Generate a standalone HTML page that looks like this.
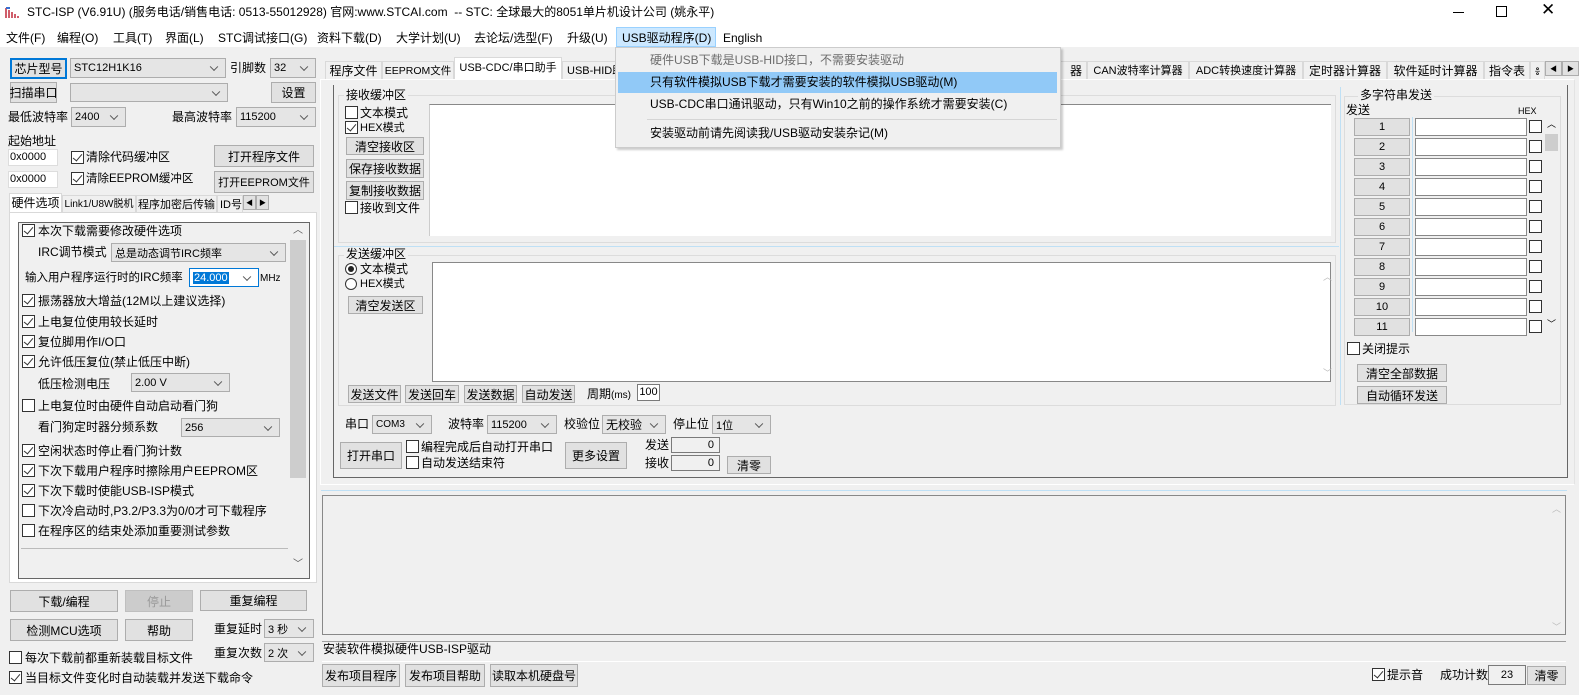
<!DOCTYPE html>
<html><head><meta charset="utf-8"><style>
*{box-sizing:border-box;margin:0;padding:0}
body{width:1579px;height:695px;overflow:hidden;background:#f0f0f0;position:relative;font:12px "Liberation Sans","Noto Sans CJK SC",sans-serif;color:#000}
div,span{position:absolute}
.t{white-space:nowrap;line-height:14px}
.b{background:#e1e1e1;border:1px solid #adadad;text-align:center;white-space:nowrap;display:flex;align-items:center;justify-content:center}
.s{background:#e5e5e5;border:1px solid #adadad;white-space:nowrap;padding-left:3px;display:flex;align-items:center;font-size:11px}
.s::after{content:"";position:absolute;right:8px;top:50%;width:5px;height:5px;border-right:1px solid #555;border-bottom:1px solid #555;transform:translateY(-70%) rotate(45deg)}
.cb{width:13px;height:13px;border:1px solid #333;background:#fff}
.cb.on::after{content:"";position:absolute;left:3px;top:0px;width:4px;height:8px;border-right:1.5px solid #333;border-bottom:1.5px solid #333;transform:rotate(40deg)}
.in{background:#fff;border:1px solid #7a7a7a}
.tab{border:1px solid #d9d9d9;border-bottom:none;background:#f0f0f0;text-align:center;white-space:nowrap;line-height:18px;overflow:hidden}
.grp{border:1px solid #dcdcdc}
</style></head><body>
<div style="left:0;top:0;width:1579px;height:47px;background:#fff"></div>
<div style="left:5px;top:6px;width:14px;height:13px">
<svg width="14" height="13"><g stroke="#c0283a" stroke-width="1.5" fill="none"><path d="M1 12V2M4 12V4M7 12V6M10 12V8M13 12V10"/></g><path d="M1 1h4v2H1z" fill="#3a6fd0"/></svg></div>
<div class="t" style="left:27px;top:5px;font-size:12px">STC-ISP (V6.91U) (服务电话/销售电话: 0513-55012928) 官网:www.STCAI.com&nbsp; -- STC: 全球最大的8051单片机设计公司 (姚永平)</div>
<div style="left:1453px;top:12px;width:11px;height:1px;background:#000"></div>
<div style="left:1496px;top:6px;width:11px;height:11px;border:1px solid #000"></div>
<div class="t" style="left:1541px;top:3px;font-size:17px;font-weight:300">✕</div>
<div class="t" style="left:6px;top:31px">文件(F)</div>
<div class="t" style="left:57px;top:31px">编程(O)</div>
<div class="t" style="left:113px;top:31px">工具(T)</div>
<div class="t" style="left:165px;top:31px">界面(L)</div>
<div class="t" style="left:218px;top:31px">STC调试接口(G)</div>
<div class="t" style="left:317px;top:31px">资料下载(D)</div>
<div class="t" style="left:396px;top:31px">大学计划(U)</div>
<div class="t" style="left:474px;top:31px">去论坛/选型(F)</div>
<div class="t" style="left:567px;top:31px">升级(U)</div>
<div style="left:616px;top:27px;width:100px;height:20px;background:#cce8ff;border:1px solid #99d1ff"></div>
<div class="t" style="left:622px;top:31px">USB驱动程序(D)</div>
<div class="t" style="left:723px;top:31px">English</div>

<div class="b" style="left:10px;top:58px;width:57px;height:21px;border:2px solid #0078d7">芯片型号</div>
<div class="s" style="left:70px;top:58px;width:156px;height:20px">STC12H1K16</div>
<div class="t" style="left:230px;top:61px">引脚数</div>
<div class="s" style="left:270px;top:58px;width:46px;height:20px">32</div>
<div class="b" style="left:10px;top:82px;width:47px;height:21px">扫描串口</div>
<div class="s" style="left:70px;top:83px;width:158px;height:19px"></div>
<div class="b" style="left:271px;top:82px;width:45px;height:21px">设置</div>
<div class="t" style="left:8px;top:110px">最低波特率</div>
<div class="s" style="left:71px;top:107px;width:55px;height:20px">2400</div>
<div class="t" style="left:172px;top:110px">最高波特率</div>
<div class="s" style="left:236px;top:107px;width:80px;height:20px">115200</div>
<div class="t" style="left:8px;top:134px">起始地址</div>
<div class="in" style="left:8px;top:149px;width:50px;height:17px;border-color:#ddd;font-size:11px;padding-left:1px;line-height:15px">0x0000</div>
<div class="cb on" style="left:71px;top:151px"></div><div class="t" style="left:86px;top:150px">清除代码缓冲区</div>
<div class="b" style="left:214px;top:145px;width:100px;height:22px">打开程序文件</div>
<div class="in" style="left:8px;top:171px;width:50px;height:17px;border-color:#ddd;font-size:11px;padding-left:1px;line-height:15px">0x0000</div>
<div class="cb on" style="left:71px;top:172px"></div><div class="t" style="left:86px;top:172px;font-size:11.5px">清除EEPROM缓冲区</div>
<div class="b" style="left:214px;top:171px;width:100px;height:22px;font-size:11px">打开EEPROM文件</div>
<div class="tab" style="left:9px;top:193px;width:53px;height:20px;background:#fff">硬件选项</div>
<div class="tab" style="left:62px;top:195px;width:74px;height:18px;font-size:10px">Link1/U8W脱机</div>
<div class="tab" style="left:136px;top:195px;width:81px;height:18px;font-size:11px">程序加密后传输</div>
<div class="tab" style="left:217px;top:195px;width:26px;height:18px;text-align:left;padding-left:2px;font-size:11px">ID号</div>
<div class="b" style="left:243px;top:195px;width:13px;height:15px;font-size:7px">◀</div>
<div class="b" style="left:256px;top:195px;width:13px;height:15px;font-size:7px">▶</div>
<div style="left:9px;top:212px;width:308px;height:371px;background:#fff;border:1px solid #d9d9d9"></div>
<div style="left:18px;top:222px;width:292px;height:357px;background:#f0f0f0;border:1px solid #666"></div>
<div style="left:290px;top:240px;width:16px;height:238px;background:#cdcdcd"></div>
<div class="t" style="left:293px;top:224px;font-size:10px;color:#555">︿</div>
<div class="t" style="left:293px;top:558px;font-size:10px;color:#555">﹀</div>
<div style="left:21px;top:548px;width:267px;height:1px;background:#bbb"></div>
<div class="cb on" style="left:22px;top:224px"></div><div class="t" style="left:38px;top:224px">本次下载需要修改硬件选项</div>
<div class="t" style="left:38px;top:245px">IRC调节模式</div>
<div class="s" style="left:111px;top:243px;width:175px;height:19px">总是动态调节IRC频率</div>
<div class="t" style="left:25px;top:271px;font-size:11.5px">输入用户程序运行时的IRC频率</div>
<div class="s" style="left:189px;top:268px;width:70px;height:19px;background:#fff;border:1px solid #0078d7"><span style="position:static;background:#0078d7;color:#fff;padding:0 1px">24.000</span></div>
<div class="t" style="left:260px;top:272px;font-size:10px">MHz</div>
<div class="cb on" style="left:22px;top:294px"></div><div class="t" style="left:38px;top:294px">振荡器放大增益(12M以上建议选择)</div>
<div class="cb on" style="left:22px;top:315px"></div><div class="t" style="left:38px;top:315px">上电复位使用较长延时</div>
<div class="cb on" style="left:22px;top:335px"></div><div class="t" style="left:38px;top:335px">复位脚用作I/O口</div>
<div class="cb on" style="left:22px;top:355px"></div><div class="t" style="left:38px;top:355px">允许低压复位(禁止低压中断)</div>
<div class="t" style="left:38px;top:377px">低压检测电压</div>
<div class="s" style="left:131px;top:373px;width:99px;height:19px">2.00 V</div>
<div class="cb" style="left:22px;top:399px"></div><div class="t" style="left:38px;top:399px">上电复位时由硬件自动启动看门狗</div>
<div class="t" style="left:38px;top:420px">看门狗定时器分频系数</div>
<div class="s" style="left:181px;top:418px;width:99px;height:19px">256</div>
<div class="cb on" style="left:22px;top:444px"></div><div class="t" style="left:38px;top:444px">空闲状态时停止看门狗计数</div>
<div class="cb on" style="left:22px;top:464px"></div><div class="t" style="left:38px;top:464px">下次下载用户程序时擦除用户EEPROM区</div>
<div class="cb on" style="left:22px;top:484px"></div><div class="t" style="left:38px;top:484px">下次下载时使能USB-ISP模式</div>
<div class="cb" style="left:22px;top:504px"></div><div class="t" style="left:38px;top:504px">下次冷启动时,P3.2/P3.3为0/0才可下载程序</div>
<div class="cb" style="left:22px;top:524px"></div><div class="t" style="left:38px;top:524px">在程序区的结束处添加重要测试参数</div>
<div class="b" style="left:10px;top:590px;width:108px;height:22px">下载/编程</div>
<div class="b" style="left:125px;top:590px;width:68px;height:22px;background:#cccccc;border-color:#bfbfbf;color:#999">停止</div>
<div class="b" style="left:200px;top:590px;width:107px;height:21px">重复编程</div>
<div class="b" style="left:10px;top:619px;width:108px;height:22px">检测MCU选项</div>
<div class="b" style="left:125px;top:619px;width:68px;height:22px">帮助</div>
<div class="t" style="left:214px;top:622px">重复延时</div>
<div class="s" style="left:264px;top:619px;width:50px;height:19px">3 秒</div>
<div class="cb" style="left:9px;top:651px"></div><div class="t" style="left:25px;top:651px">每次下载前都重新装载目标文件</div>
<div class="t" style="left:214px;top:646px">重复次数</div>
<div class="s" style="left:264px;top:643px;width:50px;height:19px">2 次</div>
<div class="cb on" style="left:9px;top:671px"></div><div class="t" style="left:25px;top:671px">当目标文件变化时自动装载并发送下载命令</div>

<div class="tab" style="left:325px;top:61px;width:57px;height:19px">程序文件</div>
<div class="tab" style="left:382px;top:61px;width:72px;height:19px;font-size:10.5px">EEPROM文件</div>
<div class="tab" style="left:454px;top:57px;width:108px;height:23px;background:#fff;line-height:20px;font-size:11px">USB-CDC/串口助手</div>
<div class="tab" style="left:562px;top:61px;width:60px;height:19px;font-size:11px;text-align:left;padding-left:4px">USB-HID助</div>
<div class="tab" style="left:1060px;top:61px;width:27px;height:19px;text-align:right;padding-right:4px">器</div>
<div class="tab" style="left:1087px;top:61px;width:102px;height:19px;font-size:11px">CAN波特率计算器</div>
<div class="tab" style="left:1189px;top:61px;width:114px;height:19px;font-size:11px">ADC转换速度计算器</div>
<div class="tab" style="left:1303px;top:61px;width:84px;height:19px">定时器计算器</div>
<div class="tab" style="left:1387px;top:61px;width:97px;height:19px">软件延时计算器</div>
<div class="tab" style="left:1484px;top:61px;width:46px;height:19px">指令表</div>
<div class="tab" style="left:1530px;top:61px;width:15px;height:19px">៖</div>
<div class="b" style="left:1545px;top:61px;width:17px;height:15px;font-size:7px">◀</div>
<div class="b" style="left:1562px;top:61px;width:17px;height:15px;font-size:7px">▶</div>
<div style="left:320px;top:79px;width:1255px;height:406px;background:#f0f0f0;border:1px solid #fff;border-right:1px solid #e3e3e3"></div>
<div style="left:333px;top:85px;width:1235px;height:393px;border:1px solid #666;border-top:none"></div>
<div class="grp" style="left:338px;top:95px;width:998px;height:148px"></div>
<div class="t" style="left:344px;top:88px;background:#f0f0f0;padding:0 2px">接收缓冲区</div>
<div class="cb" style="left:345px;top:106px"></div><div class="t" style="left:360px;top:106px">文本模式</div>
<div class="cb on" style="left:345px;top:121px"></div><div class="t" style="left:360px;top:121px;font-size:11px">HEX模式</div>
<div class="b" style="left:346px;top:137px;width:78px;height:18px">清空接收区</div>
<div class="b" style="left:346px;top:159px;width:78px;height:19px">保存接收数据</div>
<div class="b" style="left:346px;top:181px;width:78px;height:19px">复制接收数据</div>
<div class="cb" style="left:345px;top:201px"></div><div class="t" style="left:360px;top:201px">接收到文件</div>
<div style="left:429px;top:104px;width:902px;height:132px;background:#fff;border-top:1px solid #888;border-left:1px solid #ccc"></div>
<div style="left:334px;top:246px;width:1005px;height:1px;background:#bfe0f5"></div>
<div style="left:1340px;top:87px;width:1px;height:318px;background:#bfe0f5"></div>
<div class="grp" style="left:338px;top:255px;width:998px;height:151px"></div>
<div class="t" style="left:344px;top:247px;background:#f0f0f0;padding:0 2px">发送缓冲区</div>
<div style="left:345px;top:263px;width:12px;height:12px;border:1px solid #333;border-radius:50%;background:#fff"></div>
<div style="left:348px;top:266px;width:6px;height:6px;border-radius:50%;background:#222"></div>
<div class="t" style="left:360px;top:262px">文本模式</div>
<div style="left:345px;top:278px;width:12px;height:12px;border:1px solid #333;border-radius:50%;background:#fff"></div>
<div class="t" style="left:360px;top:277px;font-size:11px">HEX模式</div>
<div class="b" style="left:348px;top:296px;width:75px;height:18px">清空发送区</div>
<div style="left:432px;top:262px;width:899px;height:120px;background:#fff;border:1px solid #888"></div>
<div class="t" style="left:1323px;top:270px;font-size:9px;color:#bbb">︿</div>
<div class="t" style="left:1323px;top:366px;font-size:9px;color:#bbb">﹀</div>
<div class="b" style="left:348px;top:385px;width:53px;height:18px">发送文件</div>
<div class="b" style="left:405px;top:385px;width:54px;height:18px">发送回车</div>
<div class="b" style="left:464px;top:385px;width:53px;height:18px">发送数据</div>
<div class="b" style="left:522px;top:385px;width:53px;height:18px">自动发送</div>
<div class="t" style="left:587px;top:387px">周期<span style="position:static;font-size:10px">(ms)</span></div>
<div class="in" style="left:637px;top:384px;width:23px;height:17px;text-align:center;line-height:15px;font-size:11px">100</div>
<div class="t" style="left:345px;top:417px">串口</div>
<div class="s" style="left:372px;top:415px;width:60px;height:19px;font-size:10px">COM3</div>
<div class="t" style="left:448px;top:417px">波特率</div>
<div class="s" style="left:487px;top:415px;width:70px;height:19px">115200</div>
<div class="t" style="left:564px;top:417px">校验位</div>
<div class="s" style="left:602px;top:415px;width:64px;height:19px;font-size:12px">无校验</div>
<div class="t" style="left:673px;top:417px">停止位</div>
<div class="s" style="left:712px;top:415px;width:59px;height:19px">1位</div>
<div class="b" style="left:340px;top:442px;width:62px;height:27px">打开串口</div>
<div class="cb" style="left:406px;top:440px"></div><div class="t" style="left:421px;top:440px">编程完成后自动打开串口</div>
<div class="cb" style="left:406px;top:456px"></div><div class="t" style="left:421px;top:456px">自动发送结束符</div>
<div class="b" style="left:565px;top:442px;width:62px;height:27px">更多设置</div>
<div class="t" style="left:645px;top:438px">发送</div>
<div class="in" style="left:671px;top:437px;width:49px;height:16px;text-align:right;padding-right:5px;line-height:14px;font-size:11px;background:#f0f0f0">0</div>
<div class="t" style="left:645px;top:456px">接收</div>
<div class="in" style="left:671px;top:455px;width:49px;height:16px;text-align:right;padding-right:5px;line-height:14px;font-size:11px;background:#f0f0f0">0</div>
<div class="b" style="left:727px;top:456px;width:44px;height:18px">清零</div>
<div class="grp" style="left:1344px;top:96px;width:217px;height:309px"></div>
<div class="t" style="left:1358px;top:88px;background:#f0f0f0;padding:0 2px">多字符串发送</div>
<div class="t" style="left:1346px;top:103px">发送</div>
<div class="t" style="left:1518px;top:104px;font-size:9px">HEX</div>
<div style="left:1412px;top:117px;width:1px;height:215px;background:#bfe0f5"></div>
<div style="left:1545px;top:134px;width:13px;height:17px;background:#cdcdcd"></div>
<div class="t" style="left:1547px;top:117px;font-size:9px">︿</div>
<div class="t" style="left:1547px;top:317px;font-size:9px">﹀</div>
<div id="ms"></div>
<div class="cb" style="left:1347px;top:342px"></div><div class="t" style="left:1362px;top:342px">关闭提示</div>
<div class="b" style="left:1357px;top:364px;width:90px;height:18px">清空全部数据</div>
<div class="b" style="left:1357px;top:386px;width:90px;height:18px">自动循环发送</div>
<div style="left:321px;top:490px;width:1246px;height:1px;background:#bfe0f5"></div>
<div style="left:322px;top:495px;width:1244px;height:140px;border:1px solid #888;background:#f0f0f0"></div>
<div class="t" style="left:1552px;top:502px;font-size:9px;color:#bbb">︿</div>
<div class="t" style="left:1552px;top:620px;font-size:9px;color:#bbb">﹀</div>
<div style="left:322px;top:641px;width:1244px;height:1px;background:#a0a0a0"></div>
<div style="left:322px;top:661px;width:1244px;height:1px;background:#fff"></div>
<div class="t" style="left:323px;top:642px;font-size:12px">安装软件模拟硬件USB-ISP驱动</div>
<div class="b" style="left:322px;top:664px;width:78px;height:23px">发布项目程序</div>
<div class="b" style="left:405px;top:664px;width:80px;height:23px">发布项目帮助</div>
<div class="b" style="left:490px;top:664px;width:88px;height:23px">读取本机硬盘号</div>
<div class="cb on" style="left:1372px;top:668px"></div><div class="t" style="left:1387px;top:668px">提示音</div>
<div class="t" style="left:1440px;top:668px">成功计数</div>
<div class="in" style="left:1488px;top:665px;width:38px;height:20px;text-align:center;line-height:18px;font-size:11px;background:#f0f0f0">23</div>
<div class="b" style="left:1527px;top:666px;width:39px;height:19px">清零</div>

<div style="left:615px;top:47px;width:446px;height:101px;background:#f0f0f0;border:1px solid #ccc;box-shadow:2px 2px 2px rgba(0,0,0,.2)"></div>
<div class="t" style="left:650px;top:53px;color:#6d6d6d">硬件USB下载是USB-HID接口，不需要安装驱动</div>
<div style="left:618px;top:72px;width:439px;height:21px;background:#91c9f7"></div>
<div class="t" style="left:650px;top:75px">只有软件模拟USB下载才需要安装的软件模拟USB驱动(M)</div>
<div class="t" style="left:650px;top:97px">USB-CDC串口通讯驱动，只有Win10之前的操作系统才需要安装(C)</div>
<div style="left:647px;top:119px;width:410px;height:1px;background:#d5d5d5"></div>
<div class="t" style="left:650px;top:126px">安装驱动前请先阅读我/USB驱动安装杂记(M)</div>

<script>
var h='';for(var i=0;i<11;i++){var y=118+i*20;
h+='<div class="b" style="left:1354px;top:'+y+'px;width:56px;height:18px;font-size:11px">'+(i+1)+'</div>'+
'<div class="in" style="left:1415px;top:'+y+'px;width:112px;height:18px;border-color:#888"></div>'+
'<div class="cb" style="left:1529px;top:'+(y+2)+'px"></div>';}
document.getElementById('ms').outerHTML=h;
</script>
</body></html>
